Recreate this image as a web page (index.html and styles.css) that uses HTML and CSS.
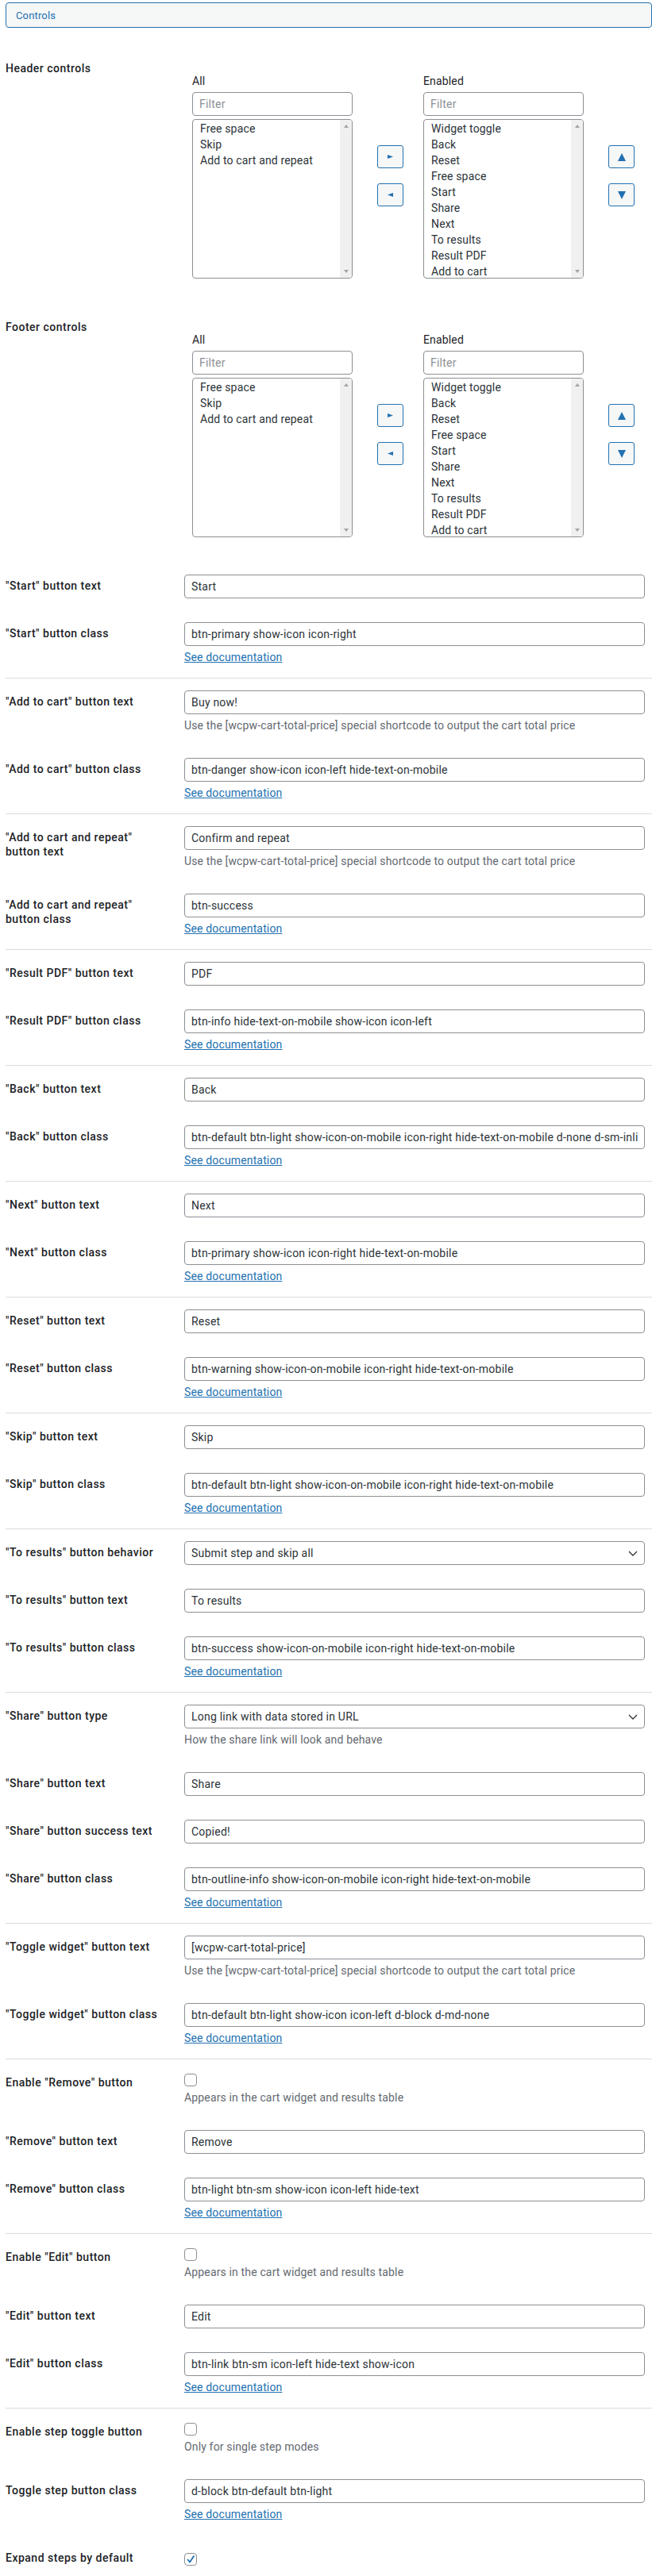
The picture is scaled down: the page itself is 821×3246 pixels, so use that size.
FILE: index.html
```html
<!DOCTYPE html>
<html lang="en">
<head>
<meta charset="utf-8">
<title>Controls</title>
<link rel="stylesheet" href="styles.css">
</head>
<body>
<div class="wrap">
  <div class="tab">Controls</div>

  <div class="row">
    <div class="th">Header controls</div>
    <div class="td">
      <div class="dual">
        <div class="col">
          <div class="col-label">All</div>
          <input class="filter" type="text" placeholder="Filter">
          <div class="list">
            <div class="items">
              <div>Free space</div><div>Skip</div><div>Add to cart and repeat</div>
            </div>
            <div class="sbar"><span class="tri-up"></span><span class="tri-down"></span></div>
          </div>
        </div>
        <div class="btns">
          <div class="abtn"><svg width="7" height="5" viewBox="0 0 7 5"><polygon points="0,0 7,2.5 0,5" fill="#2271b1"/></svg></div>
          <div class="abtn"><svg width="7" height="5" viewBox="0 0 7 5"><polygon points="7,0 0,2.5 7,5" fill="#2271b1"/></svg></div>
        </div>
        <div class="col">
          <div class="col-label">Enabled</div>
          <input class="filter" type="text" placeholder="Filter">
          <div class="list">
            <div class="items">
              <div>Widget toggle</div><div>Back</div><div>Reset</div><div>Free space</div><div>Start</div><div>Share</div><div>Next</div><div>To results</div><div>Result PDF</div><div>Add to cart</div>
            </div>
            <div class="sbar"><span class="tri-up"></span><span class="tri-down"></span></div>
          </div>
        </div>
        <div class="btns btns-ud">
          <div class="abtn"><svg width="10" height="10" viewBox="0 0 10 10"><polygon points="5,0 10,10 0,10" fill="#2271b1"/></svg></div>
          <div class="abtn"><svg width="10" height="10" viewBox="0 0 10 10"><polygon points="0,0 10,0 5,10" fill="#2271b1"/></svg></div>
        </div>
      </div>
    </div>
  </div>

  <div class="row">
    <div class="th">Footer controls</div>
    <div class="td">
      <div class="dual">
        <div class="col">
          <div class="col-label">All</div>
          <input class="filter" type="text" placeholder="Filter">
          <div class="list">
            <div class="items">
              <div>Free space</div><div>Skip</div><div>Add to cart and repeat</div>
            </div>
            <div class="sbar"><span class="tri-up"></span><span class="tri-down"></span></div>
          </div>
        </div>
        <div class="btns">
          <div class="abtn"><svg width="7" height="5" viewBox="0 0 7 5"><polygon points="0,0 7,2.5 0,5" fill="#2271b1"/></svg></div>
          <div class="abtn"><svg width="7" height="5" viewBox="0 0 7 5"><polygon points="7,0 0,2.5 7,5" fill="#2271b1"/></svg></div>
        </div>
        <div class="col">
          <div class="col-label">Enabled</div>
          <input class="filter" type="text" placeholder="Filter">
          <div class="list">
            <div class="items">
              <div>Widget toggle</div><div>Back</div><div>Reset</div><div>Free space</div><div>Start</div><div>Share</div><div>Next</div><div>To results</div><div>Result PDF</div><div>Add to cart</div>
            </div>
            <div class="sbar"><span class="tri-up"></span><span class="tri-down"></span></div>
          </div>
        </div>
        <div class="btns btns-ud">
          <div class="abtn"><svg width="10" height="10" viewBox="0 0 10 10"><polygon points="5,0 10,10 0,10" fill="#2271b1"/></svg></div>
          <div class="abtn"><svg width="10" height="10" viewBox="0 0 10 10"><polygon points="0,0 10,0 5,10" fill="#2271b1"/></svg></div>
        </div>
      </div>
    </div>
  </div>

  <div class="row">
    <div class="th">"Start" button text</div>
    <div class="td"><input class="text" type="text" value="Start"></div>
  </div>
  <div class="row sep">
    <div class="th">"Start" button class</div>
    <div class="td"><input class="text" type="text" value="btn-primary show-icon icon-right"><p class="doc"><a href="#">See documentation</a></p></div>
  </div>

  <div class="row">
    <div class="th">"Add to cart" button text</div>
    <div class="td"><input class="text" type="text" value="Buy now!"><p class="desc">Use the [wcpw-cart-total-price] special shortcode to output the cart total price</p></div>
  </div>
  <div class="row sep">
    <div class="th">"Add to cart" button class</div>
    <div class="td"><input class="text" type="text" value="btn-danger show-icon icon-left hide-text-on-mobile"><p class="doc"><a href="#">See documentation</a></p></div>
  </div>

  <div class="row">
    <div class="th">"Add to cart and repeat" button text</div>
    <div class="td"><input class="text" type="text" value="Confirm and repeat"><p class="desc">Use the [wcpw-cart-total-price] special shortcode to output the cart total price</p></div>
  </div>
  <div class="row sep">
    <div class="th">"Add to cart and repeat" button class</div>
    <div class="td"><input class="text" type="text" value="btn-success"><p class="doc"><a href="#">See documentation</a></p></div>
  </div>

  <div class="row">
    <div class="th">"Result PDF" button text</div>
    <div class="td"><input class="text" type="text" value="PDF"></div>
  </div>
  <div class="row sep">
    <div class="th">"Result PDF" button class</div>
    <div class="td"><input class="text" type="text" value="btn-info hide-text-on-mobile show-icon icon-left"><p class="doc"><a href="#">See documentation</a></p></div>
  </div>

  <div class="row">
    <div class="th">"Back" button text</div>
    <div class="td"><input class="text" type="text" value="Back"></div>
  </div>
  <div class="row sep">
    <div class="th">"Back" button class</div>
    <div class="td"><input class="text" type="text" value="btn-default btn-light show-icon-on-mobile icon-right hide-text-on-mobile d-none d-sm-inline-block"><p class="doc"><a href="#">See documentation</a></p></div>
  </div>

  <div class="row">
    <div class="th">"Next" button text</div>
    <div class="td"><input class="text" type="text" value="Next"></div>
  </div>
  <div class="row sep">
    <div class="th">"Next" button class</div>
    <div class="td"><input class="text" type="text" value="btn-primary show-icon icon-right hide-text-on-mobile"><p class="doc"><a href="#">See documentation</a></p></div>
  </div>

  <div class="row">
    <div class="th">"Reset" button text</div>
    <div class="td"><input class="text" type="text" value="Reset"></div>
  </div>
  <div class="row sep">
    <div class="th">"Reset" button class</div>
    <div class="td"><input class="text" type="text" value="btn-warning show-icon-on-mobile icon-right hide-text-on-mobile"><p class="doc"><a href="#">See documentation</a></p></div>
  </div>

  <div class="row">
    <div class="th">"Skip" button text</div>
    <div class="td"><input class="text" type="text" value="Skip"></div>
  </div>
  <div class="row sep">
    <div class="th">"Skip" button class</div>
    <div class="td"><input class="text" type="text" value="btn-default btn-light show-icon-on-mobile icon-right hide-text-on-mobile"><p class="doc"><a href="#">See documentation</a></p></div>
  </div>

  <div class="row">
    <div class="th">"To results" button behavior</div>
    <div class="td"><div class="text select"><span>Submit step and skip all</span><svg width="12" height="7" viewBox="0 0 12 7"><path d="M1 1l5 5 5-5" fill="none" stroke="#2c3338" stroke-width="1.3"/></svg></div></div>
  </div>
  <div class="row">
    <div class="th">"To results" button text</div>
    <div class="td"><input class="text" type="text" value="To results"></div>
  </div>
  <div class="row sep">
    <div class="th">"To results" button class</div>
    <div class="td"><input class="text" type="text" value="btn-success show-icon-on-mobile icon-right hide-text-on-mobile"><p class="doc"><a href="#">See documentation</a></p></div>
  </div>

  <div class="row">
    <div class="th">"Share" button type</div>
    <div class="td"><div class="text select"><span>Long link with data stored in URL</span><svg width="12" height="7" viewBox="0 0 12 7"><path d="M1 1l5 5 5-5" fill="none" stroke="#2c3338" stroke-width="1.3"/></svg></div><p class="desc">How the share link will look and behave</p></div>
  </div>
  <div class="row">
    <div class="th">"Share" button text</div>
    <div class="td"><input class="text" type="text" value="Share"></div>
  </div>
  <div class="row">
    <div class="th">"Share" button success text</div>
    <div class="td"><input class="text" type="text" value="Copied!"></div>
  </div>
  <div class="row sep">
    <div class="th">"Share" button class</div>
    <div class="td"><input class="text" type="text" value="btn-outline-info show-icon-on-mobile icon-right hide-text-on-mobile"><p class="doc"><a href="#">See documentation</a></p></div>
  </div>

  <div class="row">
    <div class="th">"Toggle widget" button text</div>
    <div class="td"><input class="text" type="text" value="[wcpw-cart-total-price]"><p class="desc">Use the [wcpw-cart-total-price] special shortcode to output the cart total price</p></div>
  </div>
  <div class="row sep">
    <div class="th">"Toggle widget" button class</div>
    <div class="td"><input class="text" type="text" value="btn-default btn-light show-icon icon-left d-block d-md-none"><p class="doc"><a href="#">See documentation</a></p></div>
  </div>

  <div class="row">
    <div class="th">Enable "Remove" button</div>
    <div class="td"><span class="cb"></span><p class="desc">Appears in the cart widget and results table</p></div>
  </div>
  <div class="row">
    <div class="th">"Remove" button text</div>
    <div class="td"><input class="text" type="text" value="Remove"></div>
  </div>
  <div class="row sep">
    <div class="th">"Remove" button class</div>
    <div class="td"><input class="text" type="text" value="btn-light btn-sm show-icon icon-left hide-text"><p class="doc"><a href="#">See documentation</a></p></div>
  </div>

  <div class="row">
    <div class="th">Enable "Edit" button</div>
    <div class="td"><span class="cb"></span><p class="desc">Appears in the cart widget and results table</p></div>
  </div>
  <div class="row">
    <div class="th">"Edit" button text</div>
    <div class="td"><input class="text" type="text" value="Edit"></div>
  </div>
  <div class="row sep">
    <div class="th">"Edit" button class</div>
    <div class="td"><input class="text" type="text" value="btn-link btn-sm icon-left hide-text show-icon"><p class="doc"><a href="#">See documentation</a></p></div>
  </div>

  <div class="row">
    <div class="th">Enable step toggle button</div>
    <div class="td"><span class="cb"></span><p class="desc">Only for single step modes</p></div>
  </div>
  <div class="row">
    <div class="th">Toggle step button class</div>
    <div class="td"><input class="text" type="text" value="d-block btn-default btn-light"><p class="doc"><a href="#">See documentation</a></p></div>
  </div>
  <div class="row">
    <div class="th">Expand steps by default</div>
    <div class="td"><span class="cb cb-mid"><svg width="12" height="12" viewBox="0 0 12 12"><path d="M2.5 6.5l2.6 3L10 2" fill="none" stroke="#2271b1" stroke-width="1.8" stroke-linecap="round" stroke-linejoin="round"/></svg></span></div>
  </div>
</div>
</body>
</html>
```

FILE: styles.css
```css
html, body {
  background: #fff;
}
body {
  margin: 0;
  padding: 3px 0 0 7px;
  font-family: Roboto, "Liberation Sans", sans-serif;
  font-size: 14px;
  letter-spacing: 0.15px;
  color: #3c434a;
}
.wrap {
  width: 814px;
}
.tab {
  height: 32px;
  box-sizing: border-box;
  border: 1px solid #2271b1;
  border-radius: 4px;
  background: #f6f7f7;
  color: #2271b1;
  font-size: 13px;
  display: flex;
  align-items: center;
  padding-left: 12px;
  margin-bottom: 22px;
}
.row {
  display: flex;
}
.row.sep {
  border-bottom: 1px solid #dcdcde;
}
.th {
  width: 200px;
  flex: none;
  padding: 20px 10px 20px 0;
  font-weight: 500;
  letter-spacing: 0.5px;
  color: #1d2327;
  line-height: 1.3;
}
.td {
  flex: 1;
  min-width: 0;
  padding: 15px 9px 15px 15px;
}
.text, .filter {
  display: block;
  width: 100%;
  box-sizing: border-box;
  height: 30px;
  margin: 0;
  border: 1px solid #8c8f94;
  border-radius: 4px;
  padding: 0 8px;
  font-family: inherit;
  font-size: 14px;
  letter-spacing: 0.22px;
  color: #2c3338;
  background: #fff;
  outline: none;
}
.select {
  display: flex;
  align-items: center;
  justify-content: space-between;
  padding-right: 8px;
}
.desc {
  margin: 4px 0 0;
  line-height: 21px;
  color: #646970;
}
.doc {
  margin: 4px 0 0;
  line-height: 21px;
}
.doc a {
  color: #2271b1;
  text-decoration: underline;
}
.cb {
  display: flex;
  align-items: center;
  justify-content: center;
  width: 16px;
  height: 16px;
  box-sizing: border-box;
  border: 1px solid #8c8f94;
  border-radius: 4px;
  background: #fff;
  margin-top: 3px;
}
.cb-mid {
  margin-top: 8px;
}

/* dual list */
.dual {
  display: flex;
  align-items: center;
  margin: 20px 0 17px 10px;
}
.col {
  width: 202px;
  flex: none;
}
.col-label {
  line-height: 20px;
  color: #1d2327;
}
.filter {
  margin-top: 4px;
}
.filter::placeholder {
  color: #8c8f94;
}
.list {
  margin-top: 4px;
  height: 201px;
  box-sizing: border-box;
  border: 1px solid #8c8f94;
  border-radius: 4px;
  display: flex;
  overflow: hidden;
  background: #fff;
}
.items {
  flex: 1;
  padding: 1px 0 0 9px;
  line-height: 20px;
  color: #2c3338;
}
.sbar {
  width: 15px;
  flex: none;
  background: #f0f0f0;
  display: flex;
  flex-direction: column;
  justify-content: space-between;
  align-items: center;
  padding: 6px 0 6px;
  box-sizing: border-box;
}
.tri-up, .tri-down {
  width: 0;
  height: 0;
  border-left: 3px solid transparent;
  border-right: 3px solid transparent;
}
.tri-up {
  border-bottom: 4px solid #a3a3a3;
}
.tri-down {
  border-top: 4px solid #a3a3a3;
}
.btns {
  display: flex;
  flex-direction: column;
  gap: 19px;
  margin: 0 25px 0 31px;
}
.btns-ud {
  margin: 0 0 0 31px;
}
.abtn {
  width: 33px;
  height: 29px;
  box-sizing: border-box;
  border: 1px solid #2271b1;
  border-radius: 3px;
  background: #f6f7f7;
  display: flex;
  align-items: center;
  justify-content: center;
}
```
